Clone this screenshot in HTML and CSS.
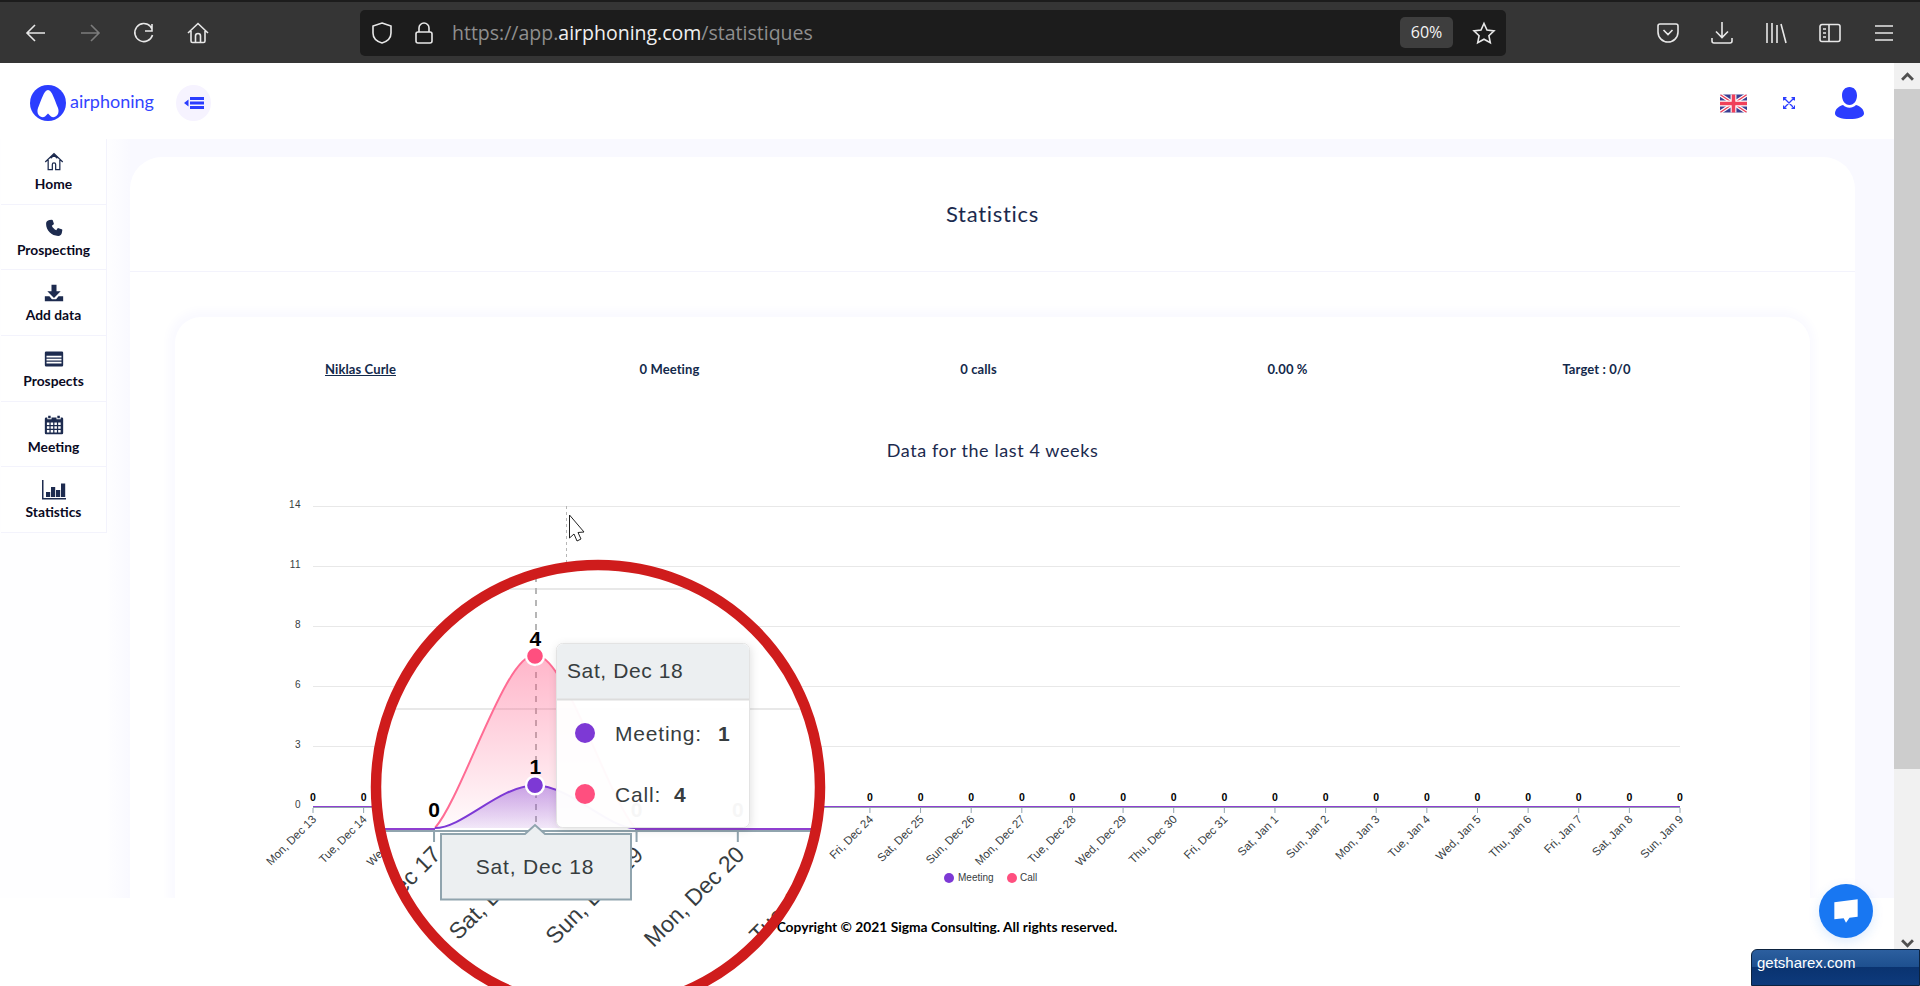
FILE: index.html
```html
<!DOCTYPE html>
<html lang="en">
<head>
  <meta charset="UTF-8" />
  <meta name="viewport" content="width=device-width, initial-scale=1" />
  <title>Airphoning - Statistics</title>
  <link rel="stylesheet" href="styles.css">
</head>
<body>
  <div class="browser">
    <div class="toolbar">
      <div class="tool-group">
        <span class="tool"><svg viewBox="0 0 24 24"><path d="M21 12H4M11 4l-8 8 8 8"/></svg></span>
        <span class="tool tool-off"><svg viewBox="0 0 24 24"><path d="M3 12h17M13 4l8 8-8 8"/></svg></span>
        <span class="tool"><svg viewBox="0 0 24 24"><path d="M20 3v7h-7M20.500 14a9 9 0 1 1-2-8.500l1.500 2.500"/></svg></span>
        <span class="tool"><svg viewBox="0 0 24 24"><path d="M2 12L12 2.500 22 12M5 10v10a1.500 1.500 0 0 0 1.500 1.500h11A1.500 1.500 0 0 0 19 20V10M9.500 21.500V15a2.500 2.500 0 0 1 5 0v6.500"/></svg></span>
      </div>
      <div class="address">
        <span class="addr-icon"><svg viewBox="0 0 24 24"><path d="M12 2l9 3v7c0 5-4 8.500-9 10-5-1.500-9-5-9-10V5z"/></svg></span>
        <span class="addr-icon addr-lock"><svg viewBox="0 0 24 24"><path d="M7 11V7a5 5 0 0 1 10 0v4M6 11h12a2 2 0 0 1 2 2v7a2 2 0 0 1-2 2H6a2 2 0 0 1-2-2v-7a2 2 0 0 1 2-2z"/></svg></span>
        <span class="url">https://app.<b>airphoning.com</b>/statistiques</span>
        <span class="zoom-badge">60%</span>
        <span class="addr-icon addr-star"><svg viewBox="0 0 24 24"><path d="M12 2.500l3 6.500 7 .9-5.100 4.800 1.400 7L12 18.200l-6.300 3.500 1.400-7L2 9.900 9 9z"/></svg></span>
      </div>
      <div class="tool-group tool-right">
        <span class="tool"><svg viewBox="0 0 24 24"><path d="M4 3h16a2 2 0 0 1 2 2v6a10 10 0 0 1-20 0V5a2 2 0 0 1 2-2zM7.500 9l4.500 4.500L16.500 9"/></svg></span>
        <span class="tool"><svg viewBox="0 0 24 24"><path d="M12 1v15M6 10.500l6 6 6-6M2 17v3a2 2 0 0 0 2 2h16a2 2 0 0 0 2-2v-3"/></svg></span>
        <span class="tool"><svg viewBox="0 0 24 24"><path d="M3 2v20M8 2v20M13 4v18M17 3l5 19"/></svg></span>
        <span class="tool"><svg viewBox="0 0 24 24"><path d="M4 3.500h16a2 2 0 0 1 2 2v13a2 2 0 0 1-2 2H4a2 2 0 0 1-2-2v-13a2 2 0 0 1 2-2zM11 3.500v17M5 8h3M5 12h3M5 16h3"/></svg></span>
        <span class="tool"><svg viewBox="0 0 24 24"><path d="M3 5h18M3 12h18M3 19h18"/></svg></span>
      </div>
    </div>

    <div class="window">
      <div class="page">
        <header class="topbar">
          <div class="logo">
            <svg class="logo-mark" viewBox="0 0 36 36"><circle cx="18" cy="18" r="18" class="blue-fill"/><path fill="#fff" d="M18 5C14 5 11 16 8 23 5.500 30 12 34 15 31.500l3-3 3 3c3 2.500 9.500-1.500 7-8.500C25 16 22 5 18 5z"/></svg>
            <span class="logo-text">airphoning</span>
          </div>
          <span class="menu-btn"><svg viewBox="0 0 20 14"><path class="blue-fill" d="M6 1h14v3H6zM6 5.500h14v3H6zM6 10h14v3H6zM4.500 3.500v7L0 7z"/></svg></span>
          <div class="top-right">
            <svg class="flag" viewBox="0 0 60 40">
              <rect width="60" height="40" fill="#3b3f92"/>
              <path d="M0 0l60 40M60 0L0 40" stroke="#fff" stroke-width="8"/>
              <path d="M0 0l60 40M60 0L0 40" stroke="#f0405a" stroke-width="3"/>
              <path d="M30 0v40M0 20h60" stroke="#fff" stroke-width="13"/>
              <path d="M30 0v40M0 20h60" stroke="#f0405a" stroke-width="8"/>
            </svg>
            <svg class="expand" viewBox="0 0 12 12"><path d="M1 1l10 10M11 1L1 11M.5 3.500V.5h3M8.500.5h3v3M.5 8.500v3h3M8.500 11.500h3v-3"/></svg>
            <svg class="user" viewBox="0 0 29 32"><path class="blue-fill" d="M14.500 0c4.500 0 7.500 3.500 7.500 8.500S19 18 14.500 18 7 13.500 7 8.500 10 0 14.500 0zM8 18c2 2 4 2.700 6.500 2.700S19 20 21 18c4.500 1.200 8 4.500 8 8.500 0 3.500-6 5.500-14.500 5.500S0 30 0 26.500C0 22.500 3.500 19.200 8 18z"/></svg>
          </div>
        </header>

        <div class="layout">
          <nav class="sidebar">
            <a class="nav-item"><svg viewBox="0 0 24 24"><path class="nav-line" d="M1.500 12L12 2l10.500 10M5 9.500V21h5v-6a2 2 0 0 1 4 0v6h5V9.500M8 7.500L12 4l4 3.500"/></svg>Home</a>
            <a class="nav-item"><svg viewBox="0 0 24 24"><path d="M6.600 2.500L9.500 2c.5 0 .8.300 1 .8l1.300 3.800c.2.500 0 .9-.4 1.200l-2 1.500c1 2.300 3 4.300 5.300 5.300l1.500-2c.3-.4.700-.6 1.200-.4l3.800 1.300c.5.200.8.500.8 1l-.5 2.900c-.4 2.600-2 4.100-4.500 4.100-8 0-14.500-6.500-14.500-14.500 0-2.500 1.500-4.100 4.100-4.500z"/></svg>Prospecting</a>
            <a class="nav-item"><svg viewBox="0 0 24 24"><path d="M9 2h6v8h5l-8 8-8-8h5zM1 16h5.500l3 3.500h5l3-3.500H23v6H1z"/></svg>Add data</a>
            <a class="nav-item"><svg viewBox="0 0 24 24"><path fill-rule="evenodd" d="M2.500 3h19A1.500 1.500 0 0 1 23 4.500v15a1.500 1.500 0 0 1-1.500 1.500h-19A1.500 1.500 0 0 1 1 19.500v-15A1.500 1.500 0 0 1 2.500 3zM3 8v2.200h18V8zm0 3.600v2.200h18v-2.200zm0 3.600v2.300h18v-2.300z"/></svg>Prospects</a>
            <a class="nav-item"><svg viewBox="0 0 24 24"><path fill-rule="evenodd" d="M5 1h3v3H5zM16 1h3v3h-3zM2.500 3H4v2h5V3h6v2h5V3h1.500A1.500 1.500 0 0 1 23 4.500v17a1.500 1.500 0 0 1-1.500 1.500h-19A1.500 1.500 0 0 1 1 21.500v-17A1.500 1.500 0 0 1 2.500 3zM3.500 9v3h3V9zm4.500 0v3h3V9zm4.500 0v3h3V9zm4.500 0v3h3V9zM3.500 13.500v3h3v-3zm4.500 0v3h3v-3zm4.500 0v3h3v-3zm4.500 0v3h3v-3zM3.500 18v3h3v-3zm4.500 0v3h3v-3zm4.500 0v3h3v-3zm4.500 0v3h3v-3z"/></svg>Meeting</a>
            <a class="nav-item nav-wide"><svg viewBox="0 0 24 20"><path d="M0 0h1.500v18H24v1.500H0zM4 12h4.200v5H4zM9 7h4.200v10H9zM14 10h4.200v7H14zM19 3.500h4.200V17H19z"/></svg>Statistics</a>
          </nav>

          <main class="main">
            <section class="card">
              <h1 class="card-title">Statistics</h1>
              <div class="card-body">
                <div class="inner-card">
                  <div class="stats-row">
                    <a class="stat stat-link">Niklas Curle</a>
                    <span class="stat">0 Meeting</span>
                    <span class="stat">0 calls</span>
                    <span class="stat">0.00 %</span>
                    <span class="stat">Target : 0/0</span>
                  </div>
                  <h2 class="chart-title">Data for the last 4 weeks</h2>
                  <svg class="chart" viewBox="260 480 1460 418">
                    <defs>
                      <linearGradient id="pinkFade" x1="0" y1="0" x2="0" y2="1">
                        <stop offset="0" stop-color="#ff4f7f" stop-opacity=".42"/>
                        <stop offset="1" stop-color="#ff4f7f" stop-opacity=".02"/>
                      </linearGradient>
                      <linearGradient id="purpleFade" x1="0" y1="0" x2="0" y2="1">
                        <stop offset="0" stop-color="#7d39d5" stop-opacity=".42"/>
                        <stop offset="1" stop-color="#7d39d5" stop-opacity=".1"/>
                      </linearGradient>
                    </defs>
                    <g id="chartBase">
                      <g id="gridLayer"></g>
                      <path class="cursor-line" d="M566.500 506V806"/>
                      <path class="area-pink" d="M516 806C530 790 552 717 566 720 580 717 602 790 616 806z"/>
                      <path class="curve-pink" d="M516 806C530 790 552 717 566 720 580 717 602 790 616 806"/>
                      <path class="area-purple" d="M516 806C530 806 548 785 566 784.600 584 785 602 806 616 806z"/>
                      <path class="curve-purple" d="M516 806C530 806 548 785 566 784.600 584 785 602 806 616 806"/>
                      <path class="axis-purple" d="M313 806.500H516M616 806.500H1680"/>
                      <circle class="point-pink" cx="566" cy="720" r="4.500"/>
                      <circle class="point-purple" cx="566" cy="784.600" r="4.500"/>
                      <g id="labelLayer"></g>
                    </g>
                    <path class="mouse" d="M569.500 515v23l4.500-4 3 7 4-2-3-6.500 6-.5z"/>
                    <circle class="blob-purple" cx="949" cy="878" r="5"/>
                    <text class="legend-text" x="958" y="881">Meeting</text>
                    <circle class="blob-pink" cx="1012" cy="878" r="5"/>
                    <text class="legend-text" x="1020" y="881">Call</text>
                  </svg>
                </div>
              </div>
            </section>
          </main>
        </div>

        <footer class="footer">Copyright © 2021 Sigma Consulting. All rights reserved.</footer>
      </div>

      <div class="scrollbar">
        <span class="scroll-btn"><svg viewBox="0 0 12 8"><path d="M1 7l5-5 5 5"/></svg></span>
        <span class="scroll-thumb"></span>
        <span class="scroll-btn scroll-down"><svg viewBox="0 0 12 8"><path d="M1 1l5 5 5-5"/></svg></span>
      </div>
    </div>

    <!-- magnifier circle over the chart, draws the same chart at 2x -->
    <svg class="magnifier" viewBox="0 0 1920 986">
      <defs>
        <clipPath id="lens"><circle cx="598" cy="787" r="222"/></clipPath>
        <filter id="tipShadow" x="-10%" y="-10%" width="120%" height="120%">
          <feDropShadow dx="1" dy="2" stdDeviation="4" flood-color="#000" flood-opacity=".12"/>
        </filter>
      </defs>
      <g clip-path="url(#lens)">
        <rect x="371" y="560" width="454" height="454" fill="#fff"/>
        <use href="#chartBase" transform="translate(-597 -784) scale(2)"/>

        <rect class="tip-box" x="556.500" y="643.500" width="193" height="184" rx="6" filter="url(#tipShadow)"/>
        <path class="tip-head" d="M557 699v-49a6 6 0 0 1 6-6h180a6 6 0 0 1 6 6v49z"/>
        <path class="tip-rule" d="M557 699.500H749"/>
        <text class="tip-title" x="567" y="678">Sat, Dec 18</text>
        <circle class="blob-purple" cx="585" cy="733" r="10"/>
        <text class="tip-text" x="615" y="741">Meeting:</text>
        <text class="tip-value" x="718" y="741">1</text>
        <circle class="blob-pink" cx="585" cy="794" r="10"/>
        <text class="tip-text" x="615" y="802">Call:</text>
        <text class="tip-value" x="674" y="802">4</text>

        <path class="xtip-box" d="M441 834H525L535 825 545 834H631V899.500H441z"/>
        <text class="xtip-text" x="535" y="874">Sat, Dec 18</text>
      </g>
      <circle class="lens-ring" cx="598" cy="787" r="222"/>
    </svg>

    <span class="chat-btn"><svg viewBox="0 0 24 24"><path d="M2 4.500L22 2v15l-7 .8-3 4.200-2-3.800-8 .8z"/></svg></span>
    <span class="sharex">getsharex.com</span>
  </div>

  <script src="chart.js"></script>
</body>
</html>
```

FILE: styles.css
```css
* {
  box-sizing: border-box;
}
html, body {
  margin: 0;
  height: 100%;
  overflow: hidden;
}
body {
  font-family: "Lato", "Liberation Sans", sans-serif;
  background: #fff;
}
.browser {
  position: relative;
  width: 1920px;
  height: 986px;
  display: flex;
  flex-direction: column;
  overflow: hidden;
}

/* firefox toolbar */
.toolbar {
  height: 63px;
  flex: none;
  display: flex;
  align-items: center;
  padding-left: 9px;
  background: #353535;
  border-top: 2px solid #1c1c1c;
}
.tool-group {
  display: flex;
}
.tool {
  width: 54px;
  display: flex;
  justify-content: center;
}
.tool svg, .addr-icon svg {
  width: 24px;
  height: 24px;
  fill: none;
  stroke: #e8e8e8;
  stroke-width: 1.6;
}
.tool-off svg {
  stroke: #7c7c7c;
}
.tool-right {
  margin-left: 135px;
}
.address {
  width: 1146px;
  height: 46px;
  margin-left: 135px;
  display: flex;
  align-items: center;
  padding: 0 9px 0 10px;
  background: #1c1c1c;
  border-radius: 5px;
}
.addr-icon {
  display: flex;
}
.addr-lock {
  margin-left: 18px;
}
.url {
  margin-left: 16px;
  font-family: "Open Sans", sans-serif;
  font-size: 19.500px;
  color: #8f8f8f;
}
.url b {
  font-weight: 400;
  color: #f0f0f0;
}
.zoom-badge {
  margin-left: auto;
  width: 53px;
  height: 31px;
  line-height: 31px;
  text-align: center;
  font-family: "Open Sans", sans-serif;
  font-size: 16px;
  color: #f4f4f4;
  background: #3e3e3e;
  border-radius: 5px;
}
.addr-star {
  margin-left: 19px;
  margin-right: 1px;
}

/* page area with scrollbar */
.window {
  flex: 1;
  display: flex;
  min-height: 0;
}
.page {
  flex: 1;
  display: flex;
  flex-direction: column;
  min-width: 0;
}
.scrollbar {
  width: 26px;
  flex: none;
  display: flex;
  flex-direction: column;
  background: #f1f1f1;
}
.scroll-btn {
  height: 26px;
  display: flex;
  align-items: center;
  justify-content: center;
}
.scroll-btn svg {
  width: 13px;
  height: 9px;
  fill: none;
  stroke: #505050;
  stroke-width: 2.6;
}
.scroll-thumb {
  height: 680px;
  background: #cdcdcd;
}
.scroll-down {
  margin-top: 161px;
}

/* page header */
.blue-fill {
  fill: #2b3dff;
}
.topbar {
  height: 76px;
  flex: none;
  display: flex;
  align-items: center;
  padding: 4px 30px 0;
  background: #fff;
}
.logo {
  display: flex;
  align-items: center;
}
.logo-mark {
  width: 36px;
  height: 36px;
}
.logo-text {
  margin: -4px 0 0 4px;
  width: 83px;
  font-size: 18px;
  color: #3344ff;
}
.menu-btn {
  width: 35px;
  height: 36px;
  margin-left: 23px;
  display: flex;
  align-items: center;
  justify-content: center;
  background: #f6f3ff;
  border-radius: 50%;
}
.menu-btn svg {
  width: 20px;
  height: 14px;
}
.top-right {
  margin-left: auto;
  display: flex;
  align-items: center;
}
.flag {
  width: 27px;
  height: 19px;
  border-radius: 2px;
}
.expand {
  width: 12px;
  height: 12px;
  margin-left: 36px;
  margin-right: 1px;
  fill: none;
  stroke: #2b3dff;
  stroke-width: 1.300;
}
.user {
  width: 29px;
  height: 32px;
  margin-left: 39px;
}

/* sidebar + content */
.layout {
  flex: 1;
  display: flex;
  min-height: 0;
  background: #fafaff;
}
.sidebar {
  width: 107px;
  flex: none;
  padding-left: 1px;
  background: #fefeff;
}
.nav-item {
  height: 65.700px;
  display: flex;
  flex-direction: column;
  align-items: center;
  padding-top: 13px;
  font-size: 13.800px;
  font-weight: 700;
  line-height: 19px;
  color: #0a0a23;
  background: #fff;
  border-right: 1px solid #f3f3fc;
  border-bottom: 1px solid #f3f3fc;
}
.nav-item svg {
  width: 20px;
  height: 20px;
  margin-bottom: 2px;
  fill: #1d2b4f;
}
.nav-item svg .nav-line {
  fill: none;
  stroke: #1d2b4f;
  stroke-width: 1.500;
}
.nav-item.nav-wide svg {
  width: 24px;
}
.main {
  flex: 1;
  min-width: 0;
  padding: 18px 39px 0 23px;
  background: linear-gradient(to right, #fefeff, #f9f9ff 23px);
}
.card {
  height: 100%;
  display: flex;
  flex-direction: column;
  background: #fff;
  border-radius: 32px 32px 0 0;
}
.card-title {
  height: 115px;
  flex: none;
  margin: 0;
  line-height: 113px;
  text-align: center;
  font-size: 22px;
  font-weight: 400;
  letter-spacing: .7px;
  color: #1b2a4e;
  border-bottom: 1px solid #f3f3fc;
}
.card-body {
  flex: 1;
  min-height: 0;
  padding: 45px 45px 0;
  background: #fff;
}
.inner-card {
  height: 100%;
  background: #fff;
  border-radius: 26px 26px 0 0;
  box-shadow: -1px -1px 8px 6px #fafaff;
}
.stats-row {
  display: grid;
  grid-template-columns: repeat(5, 309px);
  padding: 42px 0 0 31px;
  text-align: center;
  font-size: 13px;
  font-weight: 700;
  letter-spacing: .1px;
  line-height: 20px;
  color: #13294b;
}
.stat-link {
  text-decoration: underline;
}
.chart-title {
  margin: 59px 0 18px;
  line-height: 24px;
  text-align: center;
  font-size: 18px;
  font-weight: 400;
  letter-spacing: .6px;
  color: #1b2a4e;
}
.chart {
  display: block;
  width: 1460px;
  height: 418px;
  margin-left: 85px;
  font-family: "Liberation Sans", Arial, sans-serif;
}

/* chart parts */
.grid-line {
  stroke: #e8e8e8;
  stroke-width: 1;
}
.axis-line {
  stroke: #90a4ae;
  stroke-width: 1;
}
.axis-purple {
  fill: none;
  stroke: #8f3fd0;
  stroke-width: 1;
}
.cursor-line {
  stroke: #b6b6b6;
  stroke-width: 1;
  stroke-dasharray: 3 3;
}
.area-pink {
  fill: url(#pinkFade);
}
.area-purple {
  fill: url(#purpleFade);
}
.curve-pink {
  fill: none;
  stroke: #ff6c94;
  stroke-width: 1;
}
.curve-purple {
  fill: none;
  stroke: #7d39d5;
  stroke-width: 1;
}
.point-pink, .point-purple {
  stroke: #fff;
  stroke-width: 1.200;
}
.point-pink, .blob-pink {
  fill: #ff4f7f;
}
.point-purple, .blob-purple {
  fill: #7d39d5;
}
.y-label {
  font-size: 10px;
  letter-spacing: .4px;
  fill: #373d3f;
  text-anchor: end;
}
.x-label {
  font-size: 11.500px;
  fill: #373d3f;
  text-anchor: end;
}
.val-label {
  font-size: 10.500px;
  font-weight: 700;
  fill: #000;
  text-anchor: middle;
}
.legend-text {
  font-size: 10px;
  fill: #373d3f;
}
.mouse {
  fill: #fff;
  stroke: #222;
  stroke-width: 1;
}

/* magnifier */
.magnifier {
  position: absolute;
  left: 0;
  top: 0;
  width: 1920px;
  height: 986px;
  font-family: "Liberation Sans", Arial, sans-serif;
  pointer-events: none;
}
.lens-ring {
  fill: none;
  stroke: #cf1c1c;
  stroke-width: 10.500;
}
.tip-box {
  fill: rgba(255, 255, 255, .96);
  stroke: #e3e3e3;
  stroke-width: 1;
}
.tip-head {
  fill: #eceff1;
}
.tip-rule {
  stroke: #dddddd;
  stroke-width: 2;
}
.tip-title {
  font-size: 21px;
  letter-spacing: .6px;
  fill: #373d3f;
}
.tip-text {
  font-size: 21px;
  letter-spacing: .8px;
  fill: #373d3f;
}
.tip-value {
  font-size: 21px;
  font-weight: 700;
  fill: #373d3f;
}
.xtip-box {
  fill: #eceff1;
  stroke: #90a4ae;
  stroke-width: 2;
}
.xtip-text {
  font-size: 21px;
  letter-spacing: .8px;
  fill: #373d3f;
  text-anchor: middle;
}

/* footer and floating bits */
.footer {
  height: 88px;
  flex: none;
  padding-top: 18px;
  line-height: 22px;
  text-align: center;
  font-size: 13.800px;
  font-weight: 700;
  color: #000;
  background: #fff;
}
.chat-btn {
  position: absolute;
  left: 1819px;
  top: 884px;
  width: 54px;
  height: 54px;
  display: flex;
  align-items: center;
  justify-content: center;
  background: #1877f2;
  border-radius: 50%;
  box-shadow: 0 4px 12px rgba(24, 119, 242, .15);
}
.chat-btn svg {
  width: 28px;
  height: 28px;
  fill: #fff;
}
.sharex {
  position: absolute;
  right: 0;
  bottom: 0;
  width: 169px;
  height: 37px;
  padding: 2px 0 0 5px;
  line-height: 22px;
  font-family: "Liberation Sans", Arial, sans-serif;
  font-size: 15px;
  color: #fff;
  background: linear-gradient(to bottom, #2c5f9f, #1d4f8e 50%, #0a3370 50%, #0d3a7c);
  border: 1px solid #0c2340;
  border-radius: 6px 0 0 0;
}
```

FILE: chart.js
```js
// axis, grid and value labels for the 28 days of the chart
const days = [
  "Mon, Dec 13","Tue, Dec 14","Wed, Dec 15","Thu, Dec 16","Fri, Dec 17","Sat, Dec 18","Sun, Dec 19",
  "Mon, Dec 20","Tue, Dec 21","Wed, Dec 22","Thu, Dec 23","Fri, Dec 24","Sat, Dec 25","Sun, Dec 26",
  "Mon, Dec 27","Tue, Dec 28","Wed, Dec 29","Thu, Dec 30","Fri, Dec 31","Sat, Jan 1","Sun, Jan 2",
  "Mon, Jan 3","Tue, Jan 4","Wed, Jan 5","Thu, Jan 6","Fri, Jan 7","Sat, Jan 8","Sun, Jan 9"
];
const yTicks = [14, 11, 8, 6, 3, 0];
const plotLeft = 313, plotRight = 1680, plotTop = 506, plotBottom = 806;
const stepX = (plotRight - plotLeft) / (days.length - 1);
const stepY = (plotBottom - plotTop) / (yTicks.length - 1);
const svgNs = "http://www.w3.org/2000/svg";

function addNode(parent, tag, attrs, text) {
  const el = document.createElementNS(svgNs, tag);
  for (const key in attrs) el.setAttribute(key, attrs[key]);
  if (text !== undefined) el.textContent = text;
  parent.appendChild(el);
}

const gridLayer = document.getElementById("gridLayer");
const labelLayer = document.getElementById("labelLayer");

yTicks.forEach((tick, i) => {
  const y = plotTop + i * stepY;
  if (tick !== 0) addNode(gridLayer, "line", { class: "grid-line", x1: plotLeft, x2: plotRight, y1: y + 0.5, y2: y + 0.5 });
  addNode(labelLayer, "text", { class: "y-label", x: 301, y: y + 2 }, tick);
});

addNode(gridLayer, "line", { class: "axis-line", x1: plotLeft, x2: plotRight, y1: 807.5, y2: 807.5 });

days.forEach((day, i) => {
  const x = plotLeft + i * stepX;
  addNode(gridLayer, "line", { class: "axis-line", x1: x, x2: x, y1: 808, y2: 813 });
  addNode(labelLayer, "text", { class: "x-label", transform: `translate(${x + 4} 820) rotate(-45)` }, day);
  if (day === "Sat, Dec 18") {
    addNode(labelLayer, "text", { class: "val-label", x: x, y: 715 }, 4);
    addNode(labelLayer, "text", { class: "val-label", x: x, y: 779 }, 1);
  } else {
    addNode(labelLayer, "text", { class: "val-label", x: x, y: 800.5 }, 0);
  }
});
```
